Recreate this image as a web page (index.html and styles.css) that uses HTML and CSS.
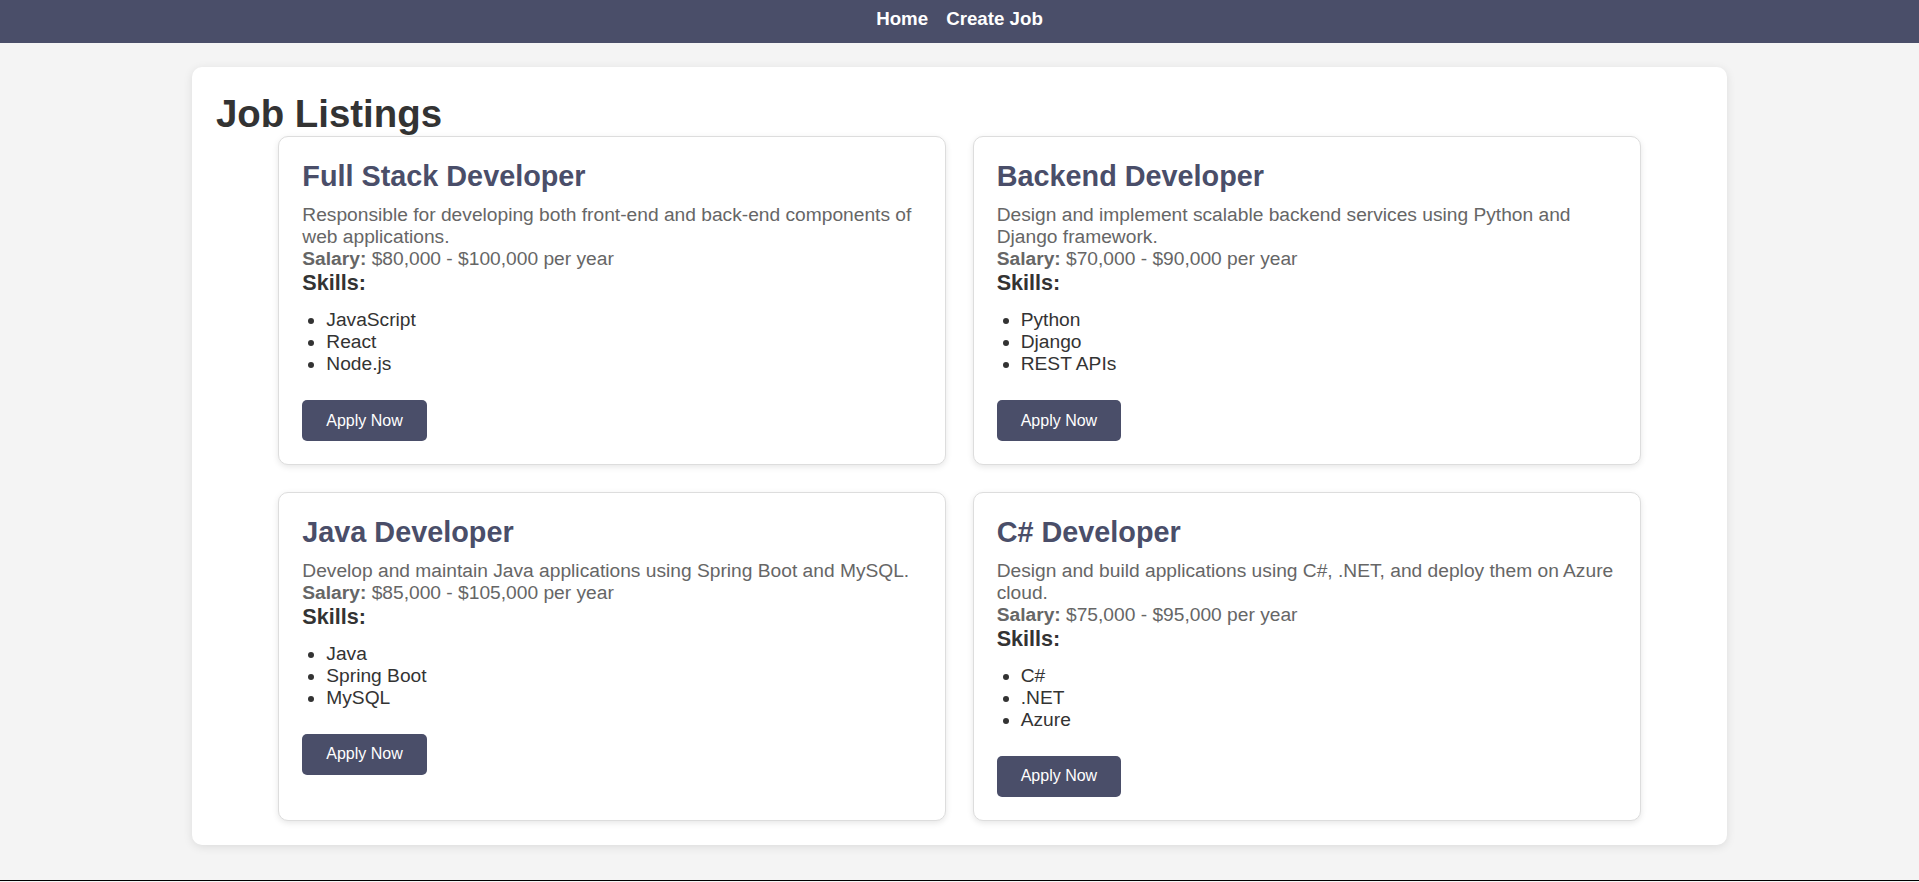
FILE: index.html
```html
<!DOCTYPE html>
<html lang="en">
<head>
<meta charset="utf-8">
<title>Job Listings</title>
<link rel="stylesheet" href="styles.css">
</head>
<body>
<nav class="nav">
  <a class="nav-link" href="#">Home</a>
  <a class="nav-link" href="#">Create Job</a>
</nav>
<main class="container">
  <h1 class="page-title">Job Listings</h1>
  <div class="job-grid">
    <div class="job-card">
      <h2 class="job-title">Full Stack Developer</h2>
      <p class="job-desc">Responsible for developing both front-end and back-end components of web applications.</p>
      <p class="job-salary"><strong>Salary:</strong> $80,000 - $100,000 per year</p>
      <h3 class="skills-title">Skills:</h3>
      <ul class="skills">
        <li>JavaScript</li>
        <li>React</li>
        <li>Node.js</li>
      </ul>
      <button class="apply-btn">Apply Now</button>
    </div>
    <div class="job-card">
      <h2 class="job-title">Backend Developer</h2>
      <p class="job-desc">Design and implement scalable backend services using Python and Django framework.</p>
      <p class="job-salary"><strong>Salary:</strong> $70,000 - $90,000 per year</p>
      <h3 class="skills-title">Skills:</h3>
      <ul class="skills">
        <li>Python</li>
        <li>Django</li>
        <li>REST APIs</li>
      </ul>
      <button class="apply-btn">Apply Now</button>
    </div>
    <div class="job-card">
      <h2 class="job-title">Java Developer</h2>
      <p class="job-desc">Develop and maintain Java applications using Spring Boot and MySQL.</p>
      <p class="job-salary"><strong>Salary:</strong> $85,000 - $105,000 per year</p>
      <h3 class="skills-title">Skills:</h3>
      <ul class="skills">
        <li>Java</li>
        <li>Spring Boot</li>
        <li>MySQL</li>
      </ul>
      <button class="apply-btn">Apply Now</button>
    </div>
    <div class="job-card">
      <h2 class="job-title">C# Developer</h2>
      <p class="job-desc">Design and build applications using C#, .NET, and deploy them on Azure cloud.</p>
      <p class="job-salary"><strong>Salary:</strong> $75,000 - $95,000 per year</p>
      <h3 class="skills-title">Skills:</h3>
      <ul class="skills">
        <li>C#</li>
        <li>.NET</li>
        <li>Azure</li>
      </ul>
      <button class="apply-btn">Apply Now</button>
    </div>
  </div>
</main>
<footer class="footer"></footer>
</body>
</html>
```

FILE: styles.css
```css
html, body {
  margin: 0;
  padding: 0;
}
body {
  background: #f4f4f4;
  font-family: "Liberation Sans", Arial, sans-serif;
  color: #333;
}
.nav {
  background: #4a4e69;
  height: 43px;
  box-sizing: border-box;
  padding-top: 8px;
  display: flex;
  justify-content: center;
  gap: 18px;
}
.nav-link {
  color: #fff;
  text-decoration: none;
  font-weight: bold;
  font-size: 18.72px;
  line-height: 21.5px;
}
.container {
  width: 80%;
  margin: 24px auto 0;
  background: #fff;
  border-radius: 10px;
  box-shadow: 0 2px 10px rgba(0, 0, 0, 0.1);
  padding: 24px;
  box-sizing: border-box;
}
.page-title {
  margin: 0;
  font-size: 38.4px;
  color: #333;
  line-height: 45px;
}
.job-grid {
  display: grid;
  grid-template-columns: repeat(2, 668px);
  justify-content: center;
  gap: 26.4px;
}
.job-card {
  background: #fff;
  border: 1px solid #ddd;
  border-radius: 10px;
  box-shadow: 0 2px 6px rgba(0, 0, 0, 0.1);
  padding: 23px 23px 23px;
}
.job-title {
  margin: 0 0 11.2px;
  font-size: 28.8px;
  line-height: normal;
  color: #4a4e69;
}
.job-desc, .job-salary {
  margin: 0;
  font-size: 19.2px;
  line-height: normal;
  color: #666;
}
.skills-title {
  margin: 0 0 13px;
  font-size: 21.6px;
  line-height: normal;
  color: #333;
}
.skills {
  margin: 0 0 25px;
  padding-left: 24px;
  font-size: 19.2px;
  line-height: normal;
  color: #333;
}
.apply-btn {
  display: block;
  background: #4a4e69;
  color: #fff;
  border: none;
  border-radius: 5px;
  font-family: "Liberation Sans", Arial, sans-serif;
  font-size: 16px;
  line-height: normal;
  padding: 11.5px 24px;
  cursor: pointer;
}
.footer {
  margin-top: 35px;
  border-top: 1px solid #000;
  height: 20px;
}
```
